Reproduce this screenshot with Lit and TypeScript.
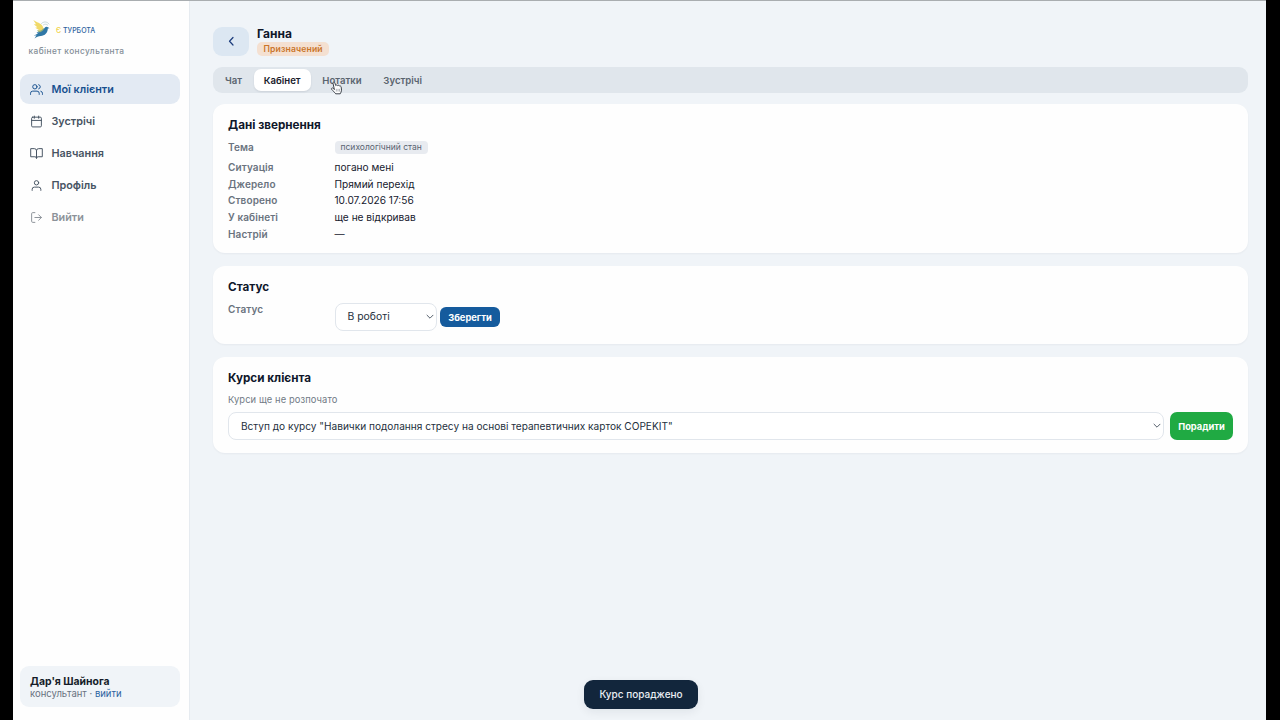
import { LitElement, html, css, svg } from 'lit';
import { customElement } from 'lit/decorators.js';
import { classMap } from 'lit/directives/class-map.js';

const icons = {
  users: svg`<path d="M17 21v-2a4 4 0 0 0-4-4H5a4 4 0 0 0-4 4v2"/><circle cx="9" cy="7" r="4"/><path d="M23 21v-2a4 4 0 0 0-3-3.87M16 3.13a4 4 0 0 1 0 7.75"/>`,
  calendar: svg`<rect x="3" y="4" width="18" height="18" rx="2"/><path d="M16 2v4M8 2v4M3 10h18"/>`,
  book: svg`<path d="M2 3h6a4 4 0 0 1 4 4v14a3 3 0 0 0-3-3H2zM22 3h-6a4 4 0 0 0-4 4v14a3 3 0 0 1 3-3h7z"/>`,
  user: svg`<path d="M20 21v-2a4 4 0 0 0-4-4H8a4 4 0 0 0-4 4v2"/><circle cx="12" cy="7" r="4"/>`,
  exit: svg`<path d="M9 21H5a2 2 0 0 1-2-2V5a2 2 0 0 1 2-2h4M16 17l5-5-5-5M21 12H9"/>`,
};

const nav = [
  { label: 'Мої клієнти', icon: icons.users, active: true },
  { label: 'Зустрічі', icon: icons.calendar },
  { label: 'Навчання', icon: icons.book },
  { label: 'Профіль', icon: icons.user },
  { label: 'Вийти', icon: icons.exit, muted: true },
];

const details = [
  ['Ситуація', 'погано мені'],
  ['Джерело', 'Прямий перехід'],
  ['Створено', '10.07.2026 17:56'],
  ['У кабінеті', 'ще не відкривав'],
  ['Настрій', '—'],
];

const chevron = html`<svg class="chev" viewBox="0 0 8 6"><path d="M1 1.2l3 3 3-3" /></svg>`;

@customElement('app-root')
export class AppRoot extends LitElement {
  static styles = css`
    :host {
      display: block;
      height: 720px;
      background: #000;
      font-family: Inter, 'Liberation Sans', sans-serif;
      font-size: 10.15px;
      color: #16202e;
      overflow: hidden;
    }
    * { box-sizing: border-box; }
    svg { display: block; flex: none; fill: none; stroke: currentColor; stroke-linecap: round; stroke-linejoin: round; }
    .page {
      position: relative;
      display: flex;
      height: 720px;
      margin: 0 14px 0 13px;
      background: #f0f4f8;
      border-top: 1px solid #a9adb0;
    }
    .side {
      display: flex;
      flex-direction: column;
      width: 177px;
      padding: 16px 9px 13px 7px;
      background: #fefefe;
      border-right: 1px solid #e6ebf0;
    }
    .brand { display: flex; align-items: center; height: 24px; padding-left: 12px; }
    .bird { width: 19px; height: 22px; stroke: none; }
    .word { margin: 3px 0 0 5px; font-size: 7px; font-weight: 500; color: #2f639f; white-space: pre; line-height: 10px; }
    .word .e { color: #f0d34c; }
    .role { margin: 4px 0 0 8.5px; font-size: 8.3px; line-height: 12px; font-weight: 500; letter-spacing: .42px; color: #848e98; }
    .nav { display: flex; flex-direction: column; gap: 2px; margin-top: 17px; }
    .item { display: flex; align-items: center; height: 30px; padding-left: 10px; gap: 8.5px; border-radius: 9px; font-size: 10.8px; font-weight: 600; color: #475463; }
    .item svg { width: 13px; height: 13px; stroke-width: 1.8; }
    .item.active { background: #e3eaf3; color: #17508f; }
    .item.muted { color: #8c9299; }
    .me { margin-top: auto; height: 41px; padding: 9px 10px; border-radius: 9px; background: #f0f4f8; }
    .me-name { font-size: 10.4px; line-height: 13px; font-weight: 700; color: #151c28; }
    .me-role { font-size: 9.5px; line-height: 11px; color: #68727f; }
    .me-role a { color: #2b62a0; }
    .main { flex: 1; min-width: 0; padding: 25px 18px 0 23px; }
    .head { display: flex; gap: 8px; height: 30px; }
    .back { display: flex; align-items: center; justify-content: center; width: 36px; height: 29px; margin-top: .5px; border-radius: 9px; background: #dce7f2; color: #1c3c7c; }
    .back svg { width: 12px; height: 12px; stroke-width: 2.4; }
    .name { font-size: 12px; line-height: 15px; font-weight: 700; color: #0f172a; }
    .badge { display: flex; align-items: center; height: 14px; margin-top: 1px; padding: 0 6.5px; border-radius: 5px; background: #f4e0d1; color: #ca7529; font-size: 8.6px; font-weight: 600; letter-spacing: .15px; }
    .tabs { display: flex; height: 26px; margin-top: 11px; padding: 2px; border-radius: 9px; background: #e0e6ec; font-size: 9.6px; font-weight: 600; color: #5a646f; }
    .tab { display: flex; align-items: center; padding: 0 10px; margin-right: 1.7px; height: 22px; border-radius: 7px; }
    .tab.on { background: #fff; color: #18202b; box-shadow: 0 1px 2px #0f172a18; }
    .card { margin-top: 13px; padding: 13px 15px 0; border-radius: 12px; background: #fefefe; box-shadow: 0 1px 2px #0f172a0c; }
    .c1 { height: 149px; margin-top: 11px; }
    .c2 { height: 78px; }
    .c3 { height: 96px; }
    h2 { margin: 0; font-size: 11.7px; line-height: 16px; font-weight: 700; color: #0f172a; }
    .rows { display: grid; grid-template-columns: 106.5px 1fr; grid-template-rows: 19.9px; grid-auto-rows: 16.75px; margin-top: 6px; line-height: 16.7px; }
    .label { color: #6a737e; font-weight: 600; font-size: 10px; letter-spacing: .1px; }
    .chip { display: flex; width: fit-content; align-items: center; height: 13px; margin-top: 2px; padding: 0 6px; border-radius: 4px; background: #e8ebf0; color: #586371; font-size: 8.5px; line-height: 13px; }
    .status { display: grid; grid-template-columns: 106.5px 1fr; }
    .status .label { margin-top: 7px; line-height: 14px; }
    .ctl { display: flex; align-items: center; gap: 3px; margin-top: 8px; }
    .select { display: flex; align-items: center; justify-content: space-between; height: 28px; padding: 0 2px 0 12px; border: 1px solid #e1e6ec; border-radius: 8px; background: #fff; font-size: 10.1px; color: #25303d; }
    .short { width: 102.500px; font-size: 10.4px; padding-bottom: 1px; }
    .chev { width: 8px; height: 6px; stroke: #56606c; stroke-width: 1; }
    .btn { display: flex; align-items: center; justify-content: center; color: #fff; font-size: 9.3px; font-weight: 700; }
    .blue { width: 60px; height: 20px; border-radius: 6px; background: #155b9d; }
    .green { width: 63px; height: 28px; border-radius: 7px; background: #20aa43; }
    .hint { margin-top: 8px; font-size: 9.35px; line-height: 12px; letter-spacing: .1px; color: #717a85; }
    .advise { display: flex; gap: 6px; margin-top: 6px; }
    .grow { flex: 1; }
    .toast { position: absolute; left: 571px; top: 679px; display: flex; align-items: center; justify-content: center; width: 114px; height: 29px; padding-bottom: 1px; border-radius: 9px; background: #12263c; color: #e9eef3; font-size: 10px; font-weight: 500; box-shadow: 0 3px 10px #0f172a12; }
    .cursor { position: absolute; left: 317px; top: 80px; width: 13px; height: 14px; }
  `;

  render() {
    return html`
      <div class="page">
        <aside class="side">
          <div class="brand">
            <svg class="bird" viewBox="0 0 19 22">
              <path fill="#f0d968" d="M1.3 2C4.5 4.3 9 5 10.8 8.5 11.8 10.5 11.5 12 11 13.5L5.5 12.6 6.7 11.7 3.2 9.7 5.3 9.2 1.8 6.2 4 6.3z" />
              <path fill="#8fac7c" d="M5 12.3c3 .8 5 .2 6.3-2l3 1.2c-.4 3-2.8 4.8-6 4.700z" />
              <path fill="#2f77a6" d="M4.5 14.2c4 .6 6.5-.9 8-4.3 1-1.3 2.5-1.5 3.5-.6l1.5.9-1.700.4c0 4.4-3 7.300-7 7.400-2.500.1-4.300 1.100-6.300 2.600l2-3.400-2.800.6 4.200-2.200z" />
              <path d="M9.5 5.5c2-2.200 5.500-2.200 7.500.5M11.500 6.800c1.400-1 3-1 4.200.3" stroke="#b9cfd2" stroke-width=".8" />
            </svg>
            <span class="word"><span class="e">Є</span> ТУРБОТА</span>
          </div>
          <div class="role">кабінет консультанта</div>
          <nav class="nav">
            ${nav.map(n => html`<div class=${classMap({ item: true, active: !!n.active, muted: !!n.muted })}>
              <svg viewBox="0 0 24 24">${n.icon}</svg><span>${n.label}</span></div>`)}
          </nav>
          <div class="me">
            <div class="me-name">Дар'я Шайнога</div>
            <div class="me-role">консультант · <a>вийти</a></div>
          </div>
        </aside>
        <main class="main">
          <header class="head">
            <div class="back"><svg viewBox="0 0 24 24"><path d="M16 5l-7 7.500 7 7.500" /></svg></div>
            <div><div class="name">Ганна</div><div class="badge">Призначений</div></div>
          </header>
          <div class="tabs">
            ${['Чат', 'Кабінет', 'Нотатки', 'Зустрічі'].map(t => html`<div class=${classMap({ tab: true, on: t === 'Кабінет' })}>${t}</div>`)}
          </div>
          <section class="card c1">
            <h2>Дані звернення</h2>
            <div class="rows">
              <div class="label">Тема</div><div><span class="chip">психологічний стан</span></div>
              ${details.map(([k, v]) => html`<div class="label">${k}</div><div>${v}</div>`)}
            </div>
          </section>
          <section class="card c2">
            <h2>Статус</h2>
            <div class="status">
              <div class="label">Статус</div>
              <div class="ctl"><div class="select short">В роботі${chevron}</div><div class="btn blue">Зберегти</div></div>
            </div>
          </section>
          <section class="card c3">
            <h2>Курси клієнта</h2>
            <div class="hint">Курси ще не розпочато</div>
            <div class="advise">
              <div class="select grow">Вступ до курсу "Навички подолання стресу на основі терапевтичних карток COPEKIT"${chevron}</div>
              <div class="btn green">Порадити</div>
            </div>
          </section>
        </main>
        <div class="toast">Курс пораджено</div>
        <svg class="cursor" viewBox="0 0 13 14">
          <path d="M4.3 8.2L3 2.2C2.8 1 4.4.7 4.8 1.8l.9 2.7c.5-.7 1.5-.6 1.9.1.6-.5 1.5-.4 1.8.4.8-.3 1.7.2 1.8 1.1l.3 3.1c0 1.6-.8 2.4-1.3 3.6H5.7C4.9 11.2 2.9 10.1 1.6 8.3c-.6-1 .7-1.9 1.5-1.2z" fill="#fff" stroke="#3c424a" stroke-width="1" />
          <path d="M6.3 8.2v2M8 8.2v2M9.6 8.2v2" stroke="#7b828a" stroke-width=".6" />
        </svg>
      </div>`;
  }
}
